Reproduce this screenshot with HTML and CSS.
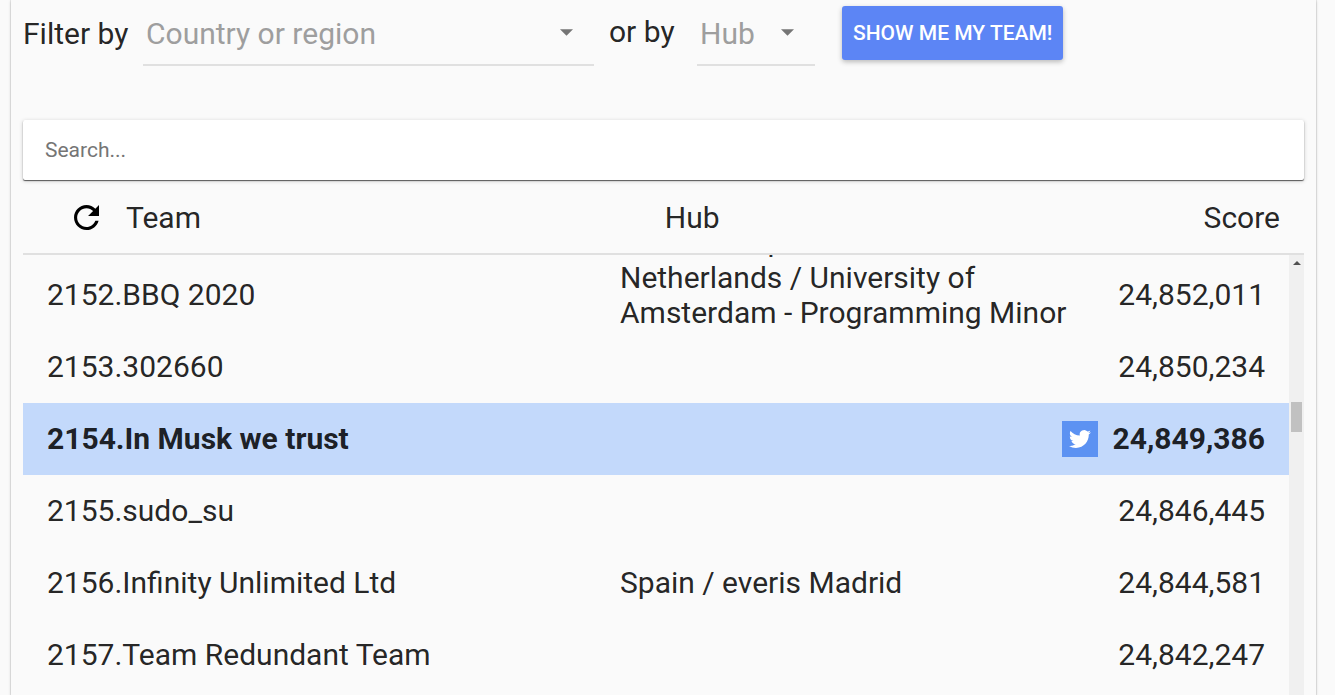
FILE: index.html
```html
<!DOCTYPE html>
<html lang="en">
<head>
<meta charset="utf-8">
<title>Scoreboard</title>
<link rel="stylesheet" href="styles.css">
</head>
<body>
<main class="panel">
  <form class="filters">
    <label class="filter-label" for="country">Filter by</label>
    <span class="picker picker-country">
      <select id="country"><option>Country or region</option></select>
      <svg class="caret" viewBox="0 0 14 7" aria-hidden="true"><path d="M0 0h14L7 7z"/></svg>
    </span>
    <label class="filter-label label-hub" for="hub">or by</label>
    <span class="picker picker-hub">
      <select id="hub"><option>Hub</option></select>
      <svg class="caret" viewBox="0 0 14 7" aria-hidden="true"><path d="M0 0h14L7 7z"/></svg>
    </span>
    <button class="team-button" type="button">Show me my team!</button>
  </form>
  <input class="search" type="text" placeholder="Search..." aria-label="Search">
  <div class="list-head">
    <div class="head-team">
      <button class="refresh" type="button" aria-label="Refresh">
        <svg viewBox="4 4 16 16" aria-hidden="true"><path d="M17.65 6.35C16.2 4.9 14.21 4 12 4c-4.42 0-7.99 3.58-7.99 8s3.57 8 7.99 8c3.73 0 6.84-2.55 7.73-6h-2.08c-.82 2.33-3.04 4-5.65 4-3.31 0-6-2.69-6-6s2.69-6 6-6c1.66 0 3.14.69 4.22 1.78L13 11h7V4l-2.35 2.35z"/></svg>
      </button>
      <span>Team</span>
    </div>
    <div class="head-hub">Hub</div>
    <div>Score</div>
  </div>
  <div class="list">
    <div class="viewport">
      <table class="teams">
        <tbody>
          <tr class="passed"><td class="team"></td><td class="hub">Serbia / Cap</td><td class="score"></td></tr>
          <tr><td class="team">2152.BBQ 2020</td><td class="hub">Netherlands / University of Amsterdam - Programming Minor</td><td class="score">24,852,011</td></tr>
          <tr><td class="team">2153.302660</td><td class="hub"></td><td class="score">24,850,234</td></tr>
          <tr class="own"><td class="team">2154.In Musk we trust</td><td class="hub"></td><td class="score"><div class="own-score"><a class="tweet" href="#" aria-label="Share on Twitter"><svg viewBox="0 0 24 24" aria-hidden="true"><path d="M23.95 4.57a10 10 0 0 1-2.82.77 4.96 4.96 0 0 0 2.16-2.72c-.95.55-2 .96-3.13 1.18a4.92 4.92 0 0 0-8.38 4.48C7.69 8.1 4.07 6.13 1.64 3.16a4.82 4.82 0 0 0-.67 2.48c0 1.71.87 3.21 2.19 4.1a4.9 4.9 0 0 1-2.23-.62v.06a4.92 4.92 0 0 0 3.95 4.83 5 5 0 0 1-2.21.08 4.94 4.94 0 0 0 4.6 3.42A9.87 9.87 0 0 1 0 19.54a13.99 13.99 0 0 0 7.56 2.21c9.05 0 14-7.5 14-13.98 0-.21 0-.42-.02-.63a9.94 9.94 0 0 0 2.46-2.55z"/></svg></a><span>24,849,386</span></div></td></tr>
          <tr><td class="team">2155.sudo_su</td><td class="hub"></td><td class="score">24,846,445</td></tr>
          <tr><td class="team">2156.Infinity Unlimited Ltd</td><td class="hub">Spain / everis Madrid</td><td class="score">24,844,581</td></tr>
          <tr><td class="team">2157.Team Redundant Team</td><td class="hub"></td><td class="score">24,842,247</td></tr>
        </tbody>
      </table>
    </div>
    <div class="track" aria-hidden="true">
      <svg class="track-up" viewBox="0 0 8 4"><path d="M0 4h8L4 0z"/></svg>
      <div class="thumb"></div>
    </div>
  </div>
</main>
</body>
</html>
```
FILE: styles.css
```css
* { box-sizing: border-box; }

body {
  margin: 0;
  height: 100vh;
  overflow: hidden;
  background: #fafafa;
  color: rgba(0, 0, 0, 0.87);
  font: 30px/35px Roboto, sans-serif;
}

button, input, select { font-family: inherit; }

.panel {
  display: flex;
  flex-direction: column;
  height: 100%;
  margin: 0 19px 0 11px;
  padding: 0 12px;
  box-shadow: 0 1px 3px rgba(0, 0, 0, 0.2), 0 0 1px rgba(0, 0, 0, 0.4);
}

.filters {
  display: flex;
  flex: none;
  align-items: center;
  height: 66px;
}

.filter-label { width: 120px; white-space: nowrap; }
.label-hub {
  width: 88px;
  margin-left: 15px;
  padding-bottom: 4px;
}

.picker {
  position: relative;
  height: 66px;
  border-bottom: 2px solid #e0e0e0;
}
.picker-country { width: 451px; }
.picker-hub { width: 118px; }

.picker select {
  width: 100%;
  height: 64px;
  padding: 2px 3px 0;
  border: 0;
  background: transparent;
  color: #9e9e9e;
  font-size: 30px;
  appearance: none;
}

.caret {
  position: absolute;
  top: 29px;
  right: 21px;
  width: 13px;
  height: 7px;
  fill: #757575;
}

.team-button {
  height: 54px;
  margin-left: 27px;
  padding: 0 11px;
  border: 0;
  border-radius: 3px;
  background: #5c85f5;
  color: #fff;
  font-size: 21px;
  font-weight: 500;
  text-transform: uppercase;
  white-space: nowrap;
  box-shadow: 0 2px 5px rgba(0, 0, 0, 0.26);
}

.search {
  flex: none;
  width: 100%;
  height: 60px;
  margin-top: 54px;
  padding: 0 22px;
  border: 0;
  border-radius: 2px;
  background: #fff;
  font-size: 21px;
  box-shadow: 0 1px 4px rgba(0, 0, 0, 0.2), 0 1px 1px rgba(0, 0, 0, 0.6);
}
.search::placeholder { color: #757575; }

.list-head {
  display: flex;
  flex: none;
  align-items: center;
  height: 75px;
  padding: 2px 24px 0 51px;
  border-bottom: 2px solid #e0e0e0;
}

.head-team {
  display: flex;
  flex: 591 0 0;
  align-items: center;
  gap: 27px;
}
.head-hub { flex: 539 0 0; }

.refresh {
  display: flex;
  padding: 0;
  border: 0;
  background: none;
}
.refresh svg { width: 25px; height: 25px; }

.list {
  display: flex;
  flex: 1;
  min-height: 0;
}

.viewport { flex: 1; overflow: hidden; }

.teams {
  width: 100%;
  margin-top: -68px;
  border-collapse: collapse;
  table-layout: fixed;
}
.teams tr { height: 72px; }
.teams td { padding: 0 0 1px; }
.teams .team { width: 597px; padding-left: 24px; }
.teams .score {
  width: 214px;
  padding-right: 24px;
  text-align: right;
  white-space: nowrap;
}
.teams .passed td { vertical-align: bottom; }

.own { background: #c3d9fb; font-weight: 700; }

.own-score {
  display: flex;
  justify-content: flex-end;
  align-items: center;
  gap: 15px;
}

.tweet {
  display: flex;
  flex: none;
  align-items: center;
  justify-content: center;
  width: 36px;
  height: 36px;
  background: #5c92f2;
}
.tweet svg { width: 22px; height: 22px; fill: #fff; }

.track {
  display: flex;
  flex: none;
  flex-direction: column;
  align-items: center;
  width: 15px;
  padding-top: 6px;
  background: #f0f0f0;
}
.track-up { width: 8px; height: 4px; fill: #505050; }
.thumb {
  width: 11px;
  height: 30px;
  margin-top: 137px;
  background: #c1c1c1;
}
```
